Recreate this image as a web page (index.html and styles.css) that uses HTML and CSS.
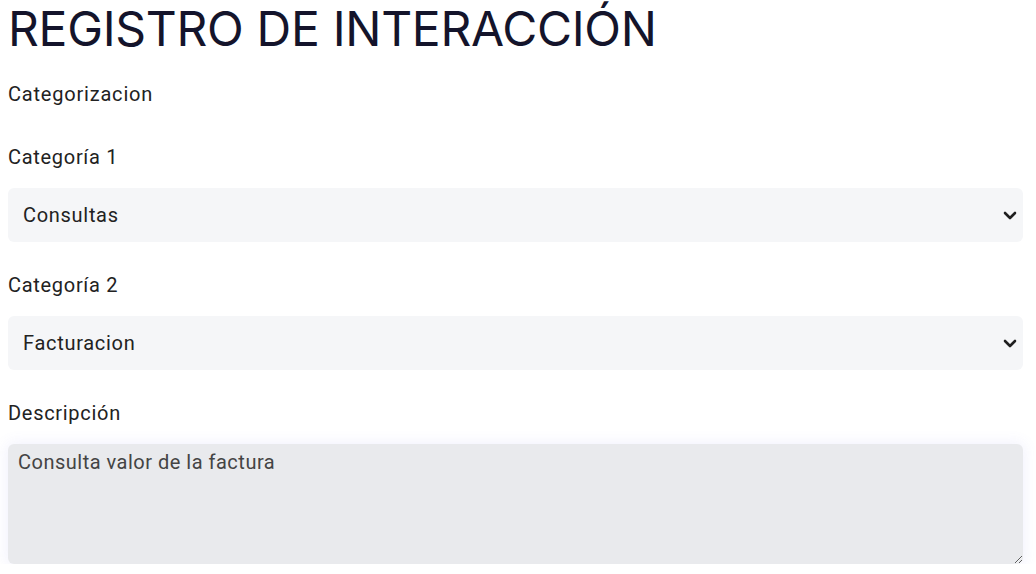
FILE: index.html
```html
<!DOCTYPE html>
<html lang="es">
<head>
<meta charset="utf-8">
<title>Registro de interacción</title>
<link rel="stylesheet" href="styles.css">
</head>
<body>
<main class="page">
  <h1 class="title">REGISTRO DE INTERACCIÓN</h1>
  <p class="section">Categorizacion</p>
  <div class="field">
    <label class="label" for="cat1">Categoría 1</label>
    <div class="select-wrap">
      <select id="cat1" class="select"><option>Consultas</option></select>
      <svg class="chev" width="14" height="9" viewBox="0 0 14 9"><path d="M2 2l5 5 5-5" fill="none" stroke="#1f1f1f" stroke-width="2.6" stroke-linecap="round" stroke-linejoin="round"/></svg>
    </div>
  </div>
  <div class="field">
    <label class="label" for="cat2">Categoría 2</label>
    <div class="select-wrap">
      <select id="cat2" class="select"><option>Facturacion</option></select>
      <svg class="chev" width="14" height="9" viewBox="0 0 14 9"><path d="M2 2l5 5 5-5" fill="none" stroke="#1f1f1f" stroke-width="2.6" stroke-linecap="round" stroke-linejoin="round"/></svg>
    </div>
  </div>
  <div class="field">
    <label class="label" for="desc">Descripción</label>
    <textarea id="desc" class="textarea">Consulta valor de la factura</textarea>
  </div>
</main>
</body>
</html>
```
FILE: styles.css
```css
html, body {
  margin: 0;
  padding: 0;
  background: #ffffff;
}
.page {
  padding: 0 13px 0 8px;
  display: flex;
  flex-direction: column;
}
.title {
  margin: 0;
  font-family: "Inter", "DejaVu Sans", sans-serif;
  font-weight: 400;
  font-size: 48px;
  line-height: 58px;
  color: #14142b;
  letter-spacing: -0.3px;
}
.section {
  margin: 24px 0 0;
  font-family: "Roboto", "Liberation Sans", sans-serif;
  font-size: 20px;
  line-height: 24px;
  letter-spacing: 0.8px;
  color: #222222;
}
.field {
  display: flex;
  flex-direction: column;
  margin-top: 39px;
}
.field + .field {
  margin-top: 31px;
}
.label {
  font-family: "Roboto", "Liberation Sans", sans-serif;
  font-size: 20px;
  line-height: 24px;
  letter-spacing: 0.7px;
  color: #222222;
  margin-bottom: 19px;
}
.select-wrap {
  position: relative;
}
.select {
  appearance: none;
  -webkit-appearance: none;
  display: block;
  width: 100%;
  height: 54px;
  border: none;
  border-radius: 6px;
  background: #f5f6f8;
  padding: 0 40px 0 15px;
  font-family: "Roboto", "Liberation Sans", sans-serif;
  font-size: 20px;
  letter-spacing: 0.7px;
  color: #222222;
  outline: none;
}
.chev {
  position: absolute;
  right: 6px;
  top: 23px;
  pointer-events: none;
}
.textarea {
  display: block;
  width: 100%;
  box-sizing: border-box;
  height: 120px;
  border: none;
  border-radius: 6px;
  background: #e9eaed;
  padding: 6px 10px;
  font-family: "Roboto", "Liberation Sans", sans-serif;
  font-size: 20px;
  line-height: 24px;
  letter-spacing: 0.5px;
  color: #444444;
  box-shadow: 0 0 14px 2px rgba(110, 110, 230, 0.09);
  outline: none;
  resize: vertical;
}
```
